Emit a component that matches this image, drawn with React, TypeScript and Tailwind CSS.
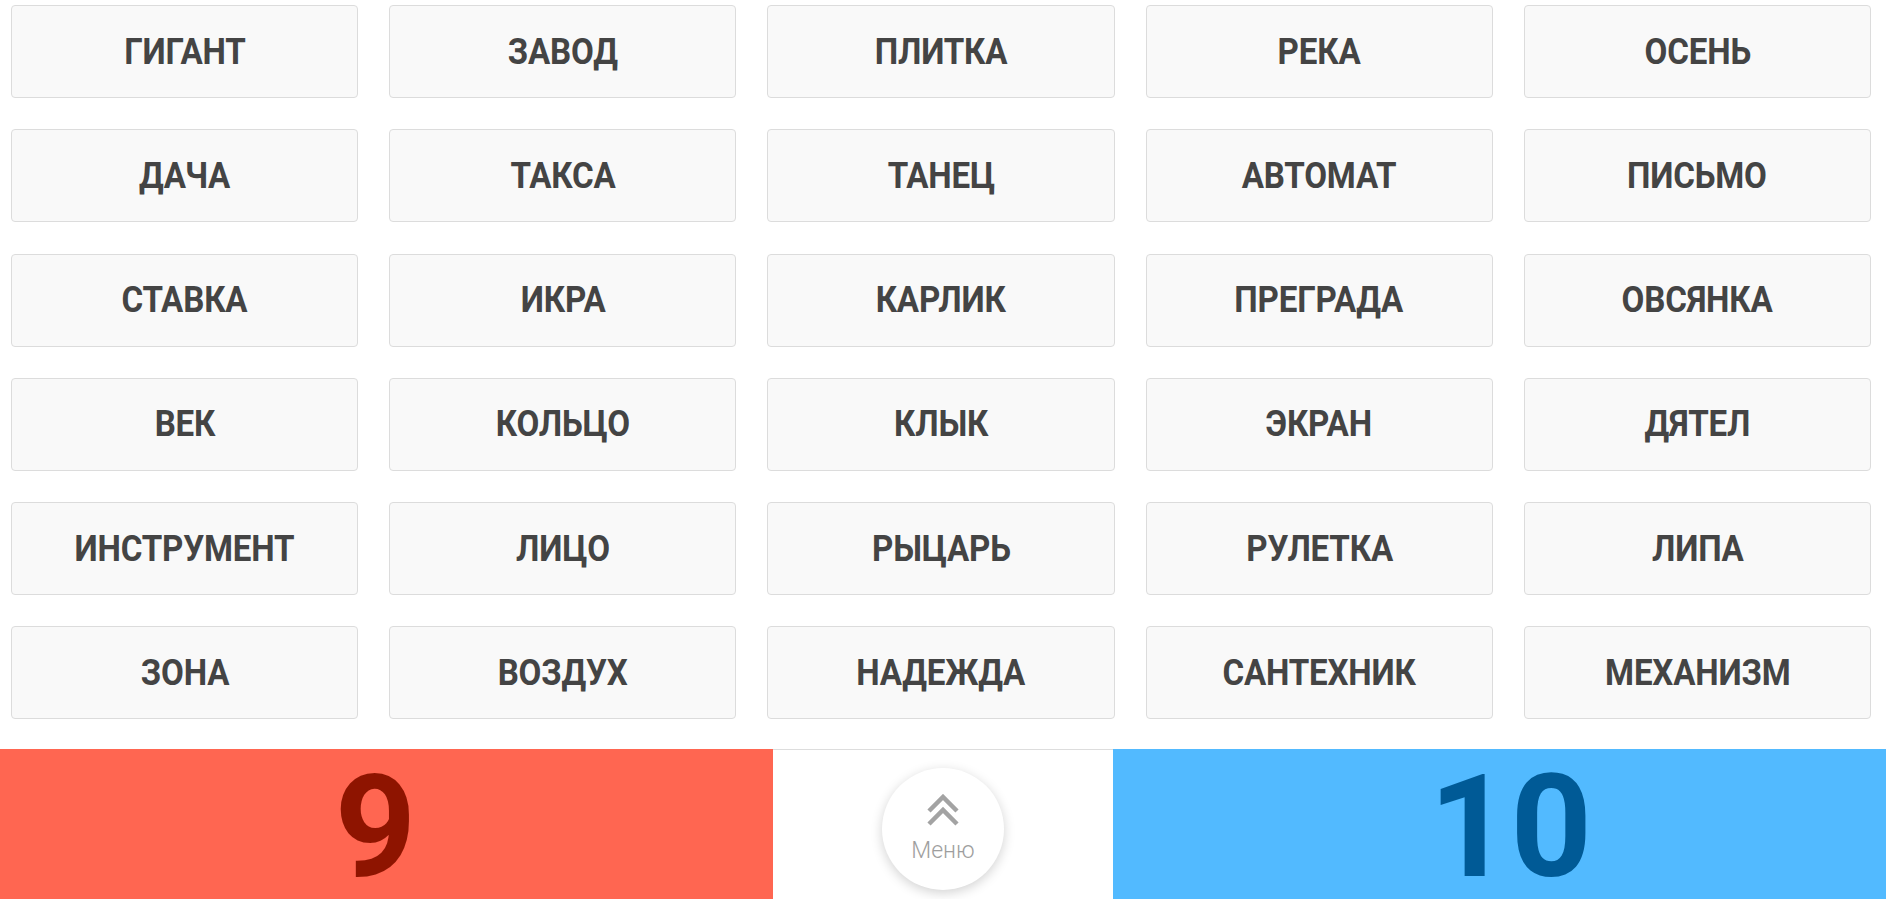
import React from 'react';

const words = [
  'ГИГАНТ', 'ЗАВОД', 'ПЛИТКА', 'РЕКА', 'ОСЕНЬ',
  'ДАЧА', 'ТАКСА', 'ТАНЕЦ', 'АВТОМАТ', 'ПИСЬМО',
  'СТАВКА', 'ИКРА', 'КАРЛИК', 'ПРЕГРАДА', 'ОВСЯНКА',
  'ВЕК', 'КОЛЬЦО', 'КЛЫК', 'ЭКРАН', 'ДЯТЕЛ',
  'ИНСТРУМЕНТ', 'ЛИЦО', 'РЫЦАРЬ', 'РУЛЕТКА', 'ЛИПА',
  'ЗОНА', 'ВОЗДУХ', 'НАДЕЖДА', 'САНТЕХНИК', 'МЕХАНИЗМ',
];

const WordCard: React.FC<{ word: string }> = ({ word }) => (
  <button className="h-[93px] flex items-center justify-center rounded-[4px] border border-[#dcdcdc] bg-[#f9f9f9] text-[#444]">
    {/* condensed look: narrow the bold face a bit */}
    <span className="inline-block text-[36px] font-bold leading-none tracking-[-0.2px] scale-x-[0.92]">{word}</span>
  </button>
);

export default function App() {
  return (
    <div className="w-[1886px] bg-white font-['Roboto','Liberation_Sans',sans-serif]">
      <div className="grid grid-cols-5 gap-x-[31px] gap-y-[31.3px] pl-[11px] pr-[15px] pt-[5px] pb-[30px]">
        {words.map(w => (
          <WordCard key={w} word={w} />
        ))}
      </div>

      <div className="flex h-[150px]">
        <div className="flex-1 bg-[#ff6651] flex justify-center pr-[22px] pt-[19px]">
          <span className="text-[142px] font-bold leading-[120px] text-[#8e1400]">9</span>
        </div>
        <div className="w-[340px] border-t border-[#dddddd] flex justify-center pt-[18px]">
          <button className="w-[122px] h-[122px] rounded-full bg-white shadow-[0_3px_12px_rgba(0,0,0,0.18)] flex flex-col items-center pt-[26px]">
            <svg width="34" height="33" viewBox="0 0 34 33" fill="none" stroke="#a3a3a3" strokeWidth="4.5">
              <path d="M3 17 L17 3 L31 17" />
              <path d="M3 30 L17 16 L31 30" />
            </svg>
            <span className="mt-[12px] text-[23px] font-light text-[#9e9e9e] leading-none">Меню</span>
          </button>
        </div>
        <div className="flex-1 bg-[#52baff] flex justify-center pl-[22px] pt-[19px]">
          <span className="text-[142px] font-bold leading-[120px] text-[#005a96]">10</span>
        </div>
      </div>
    </div>
  );
}
